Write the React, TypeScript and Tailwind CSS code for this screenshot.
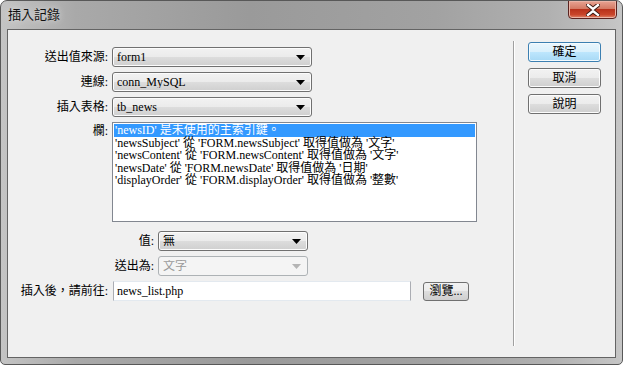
import type { ReactNode } from "react"

const cjk = "font-['Liberation_Serif','Noto_Sans_CJK_TC',serif]"

function Arrow({ disabled }: { disabled?: boolean }) {
  return (
    <svg width="9" height="5" viewBox="0 0 9 5" className="shrink-0">
      <path d="M0 0H9L4.5 5Z" fill={disabled ? "#b4b4b4" : "#000"} />
    </svg>
  )
}

function Select({ value, width, disabled }: { value: string; width: string; disabled?: boolean }) {
  return (
    <div
      className={
        "flex items-center h-[20px] pl-[4px] pr-[6px] rounded-[3px] border text-[12px] leading-none " +
        width +
        (disabled
          ? " border-[#adb2b5] bg-[#f4f4f4] text-[#9a9a9a]"
          : " border-[#707070] text-black bg-[linear-gradient(to_bottom,#f2f2f2_0%,#ebebeb_50%,#dddddd_50%,#cfcfcf_100%)] shadow-[inset_0_0_0_1px_#fcfcfc]")
      }
    >
      <span className="flex-1 truncate">{value}</span>
      <Arrow disabled={disabled} />
    </div>
  )
}

function Row({ label, labelWidth, children, className = "" }: { label: string; labelWidth: string; children: ReactNode; className?: string }) {
  return (
    <div className={"flex items-center " + className}>
      <div className={"text-right text-[12px] leading-none pr-[4px] " + labelWidth}>{label}</div>
      {children}
    </div>
  )
}

function Button({ label, primary }: { label: string; primary?: boolean }) {
  return (
    <div
      className={
        "w-[73px] h-[20px] flex items-center justify-center rounded-[3px] border text-[12px] leading-none " +
        (primary
          ? "border-[#3c7fb1] bg-[linear-gradient(to_bottom,#eaf6fd_0%,#d9f0fc_50%,#bee6fd_50%,#a7d9f5_100%)] shadow-[inset_0_0_0_1px_#f4fbfe]"
          : "border-[#707070] bg-[linear-gradient(to_bottom,#f2f2f2_0%,#ebebeb_50%,#dddddd_50%,#cfcfcf_100%)] shadow-[inset_0_0_0_1px_#fcfcfc]")
      }
    >
      {label}
    </div>
  )
}

const items = [
  "'newsID' 是未使用的主索引鍵。",
  "'newsSubject' 從 'FORM.newsSubject' 取得值做為 '文字'",
  "'newsContent' 從 'FORM.newsContent' 取得值做為 '文字'",
  "'newsDate' 從 'FORM.newsDate' 取得值做為 '日期'",
  "'displayOrder' 從 'FORM.displayOrder' 取得值做為 '整數'",
]

export default function App() {
  return (
    <div className={"w-[623px] h-[365px] bg-white " + cjk}>
      <div className="w-[623px] h-[365px] flex flex-col rounded-t-[7px] rounded-b-[5px] border border-[#585858] bg-[linear-gradient(to_right,#c4c4c4_0%,#a9a9a9_12%,#9a9a9a_40%,#a2a2a2_70%,#b0b0b0_88%,#c6c6c6_100%)] overflow-hidden">
        {/* title bar */}
        <div className="h-[28px] flex items-start relative shrink-0">
          <div className="pl-[7px] pt-[7px] text-[13px] leading-none text-[#111] [text-shadow:0_0_6px_#e8e8e8]">插入記錄</div>
          <div className="ml-auto mr-[5px] w-[49px] h-[19px] -mt-px flex items-center justify-center rounded-b-[4px] border border-[#5a2320] bg-[linear-gradient(to_bottom,#e8a493_0%,#d47a64_45%,#b8321b_50%,#c9452a_80%,#e0866a_100%)] shadow-[inset_0_0_0_1px_#eab4a6]">
            <svg width="14" height="12" viewBox="0 0 14 12">
              <path d="M2 1L7 5L12 1M2 11L7 7L12 11" stroke="#3a1a14" strokeWidth="4.2" fill="none" strokeLinecap="square" />
              <path d="M2 1L7 5L12 1M2 11L7 7L12 11" stroke="#fff" strokeWidth="2.3" fill="none" strokeLinecap="square" />
            </svg>
          </div>
        </div>

        {/* client area */}
        <div className="flex-1 mx-[6px] mb-[6px] border border-[#646464] bg-[#f0f0f0] flex">
          <div className="w-[505px] flex flex-col pt-[17px]">
            <Row label="送出值來源:" labelWidth="w-[104px]">
              <Select value="form1" width="w-[200px]" />
            </Row>
            <Row label="連線:" labelWidth="w-[104px]" className="mt-[5px]">
              <Select value="conn_MySQL" width="w-[200px]" />
            </Row>
            <Row label="插入表格:" labelWidth="w-[104px]" className="mt-[5px]">
              <Select value="tb_news" width="w-[200px]" />
            </Row>
            <div className="flex items-start mt-[5px]">
              <div className="w-[104px] text-right text-[12px] leading-none pr-[4px] pt-[3px]">欄:</div>
              <div className="w-[365px] h-[100px] border border-[#828790] bg-white p-px text-[12px] leading-[12.5px] whitespace-nowrap overflow-hidden">
                {items.map((t, i) => (
                  <div key={t} className={"pl-px " + (i === 0 ? "bg-[#3399ff] text-white" : "text-black")}>
                    {t}
                  </div>
                ))}
              </div>
            </div>
            <Row label="值:" labelWidth="w-[150px]" className="mt-[9px]">
              <Select value="無" width="w-[150px]" />
            </Row>
            <Row label="送出為:" labelWidth="w-[150px]" className="mt-[5px]">
              <Select value="文字" width="w-[150px]" disabled />
            </Row>
            <div className="flex items-center mt-[5px]">
              <div className="w-[105px] text-right text-[12px] leading-none pr-[5px]">插入後，請前往:</div>
              <div className="w-[298px] h-[20px] flex items-center pl-[3px] border border-[#abadb3] border-t-[#e3e9ef] border-b-[#e3e9ef] bg-white text-[12px] leading-none">
                news_list.php
              </div>
              <div className="ml-[12px] w-[46px] h-[19px] flex items-center justify-center rounded-[3px] border border-[#707070] bg-[linear-gradient(to_bottom,#f2f2f2_0%,#ebebeb_50%,#dddddd_50%,#cfcfcf_100%)] text-[12px] leading-none">
                瀏覽...
              </div>
            </div>
          </div>
          <div className="w-px bg-[#a0a0a0] mt-[11px] mb-[11px] shadow-[1px_0_0_#ffffff]" />
          <div className="flex flex-col gap-[6px] pl-[14px] pt-[12px]">
            <Button label="確定" primary />
            <Button label="取消" />
            <Button label="說明" />
          </div>
        </div>
      </div>
    </div>
  )
}
